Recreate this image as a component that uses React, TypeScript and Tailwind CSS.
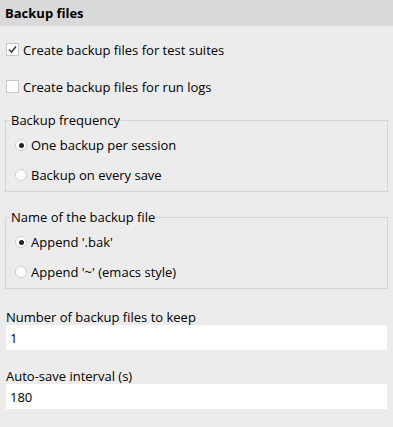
import React, { useState } from 'react';

function CheckRow({ label, checked, onToggle }: { label: string; checked: boolean; onToggle: () => void }) {
    return (
        <label className="flex items-center h-[37px] pl-[6px] cursor-pointer" onClick={onToggle}>
            <span className="w-[13px] h-[13px] bg-white border border-[#c8c8c8] flex items-center justify-center">
                {checked && (
                    <svg width="9" height="9" viewBox="0 0 9 9">
                        <path d="M1 4.5 L3.5 7 L8 1.5" fill="none" stroke="#3c3c3c" strokeWidth="1.6" />
                    </svg>
                )}
            </span>
            <span className="ml-[4px]">{label}</span>
        </label>
    );
}

function RadioRow({ label, selected, onSelect }: { label: string; selected: boolean; onSelect: () => void }) {
    return (
        <label className="flex items-center h-[30px] pl-[9px] cursor-pointer" onClick={onSelect}>
            <span className="w-[12px] h-[12px] rounded-full bg-white border border-[#d0d0d0] flex items-center justify-center">
                {selected && <span className="w-[5px] h-[5px] rounded-full bg-[#222]" />}
            </span>
            <span className="ml-[4px]">{label}</span>
        </label>
    );
}

function GroupBox({ title, children }: { title: string; children: React.ReactNode }) {
    return (
        <fieldset className="mx-[5px] border border-[#d5d5d5] pb-[1px]">
            <legend className="ml-[4px] px-[1px] leading-[16px]">{title}</legend>
            <div className="mt-[2px]">{children}</div>
        </fieldset>
    );
}

export default function App() {
    const [testSuites, setTestSuites] = useState(true);
    const [runLogs, setRunLogs] = useState(false);
    const [frequency, setFrequency] = useState('session');
    const [naming, setNaming] = useState('bak');
    const [keep, setKeep] = useState('1');
    const [interval, setInterval] = useState('180');

    return (
        <div className="w-[393px] h-[427px] bg-[#ececec] text-[13px] text-black font-['Open_Sans',sans-serif] leading-[18px]">
            {/* Header */}
            <div className="h-[26px] bg-[#d9d9d9] flex items-center pl-[5px] font-bold">Backup files</div>

            <div className="pt-[5px]">
                <CheckRow label="Create backup files for test suites" checked={testSuites} onToggle={() => setTestSuites(!testSuites)} />
                <CheckRow label="Create backup files for run logs" checked={runLogs} onToggle={() => setRunLogs(!runLogs)} />
            </div>

            <div className="mt-[7px]">
                <GroupBox title="Backup frequency">
                    <RadioRow label="One backup per session" selected={frequency === 'session'} onSelect={() => setFrequency('session')} />
                    <RadioRow label="Backup on every save" selected={frequency === 'save'} onSelect={() => setFrequency('save')} />
                </GroupBox>
            </div>

            <div className="mt-[17px]">
                <GroupBox title="Name of the backup file">
                    <RadioRow label="Append '.bak'" selected={naming === 'bak'} onSelect={() => setNaming('bak')} />
                    <RadioRow label="Append '~' (emacs style)" selected={naming === 'emacs'} onSelect={() => setNaming('emacs')} />
                </GroupBox>
            </div>

            <div className="px-[6px] mt-[20px]">
                <div className="leading-[16px]">Number of backup files to keep</div>
                <input
                    value={keep}
                    onChange={(e) => setKeep(e.target.value)}
                    className="w-full h-[25px] bg-white px-[4px] outline-none"
                />
                <div className="mt-[18px] leading-[16px]">Auto-save interval (s)</div>
                <input
                    value={interval}
                    onChange={(e) => setInterval(e.target.value)}
                    className="w-full h-[25px] bg-white px-[4px] outline-none"
                />
            </div>
        </div>
    );
}
